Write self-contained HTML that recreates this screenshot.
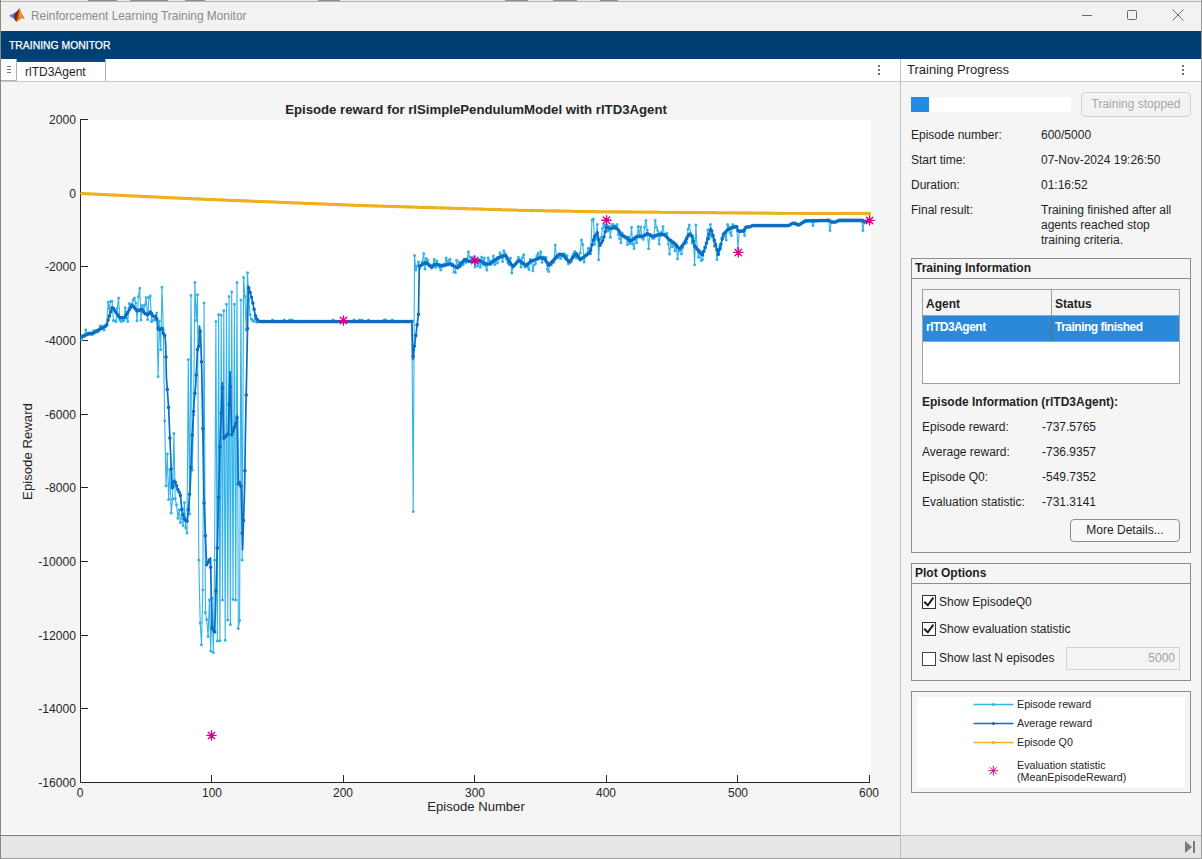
<!DOCTYPE html>
<html><head><meta charset="utf-8">
<style>
*{margin:0;padding:0;box-sizing:border-box}
html,body{width:1202px;height:859px;overflow:hidden;background:#f5f5f5;font-family:"Liberation Sans",sans-serif;color:#212121}
.a{position:absolute;white-space:nowrap}
#title{left:0;top:0;width:1202px;height:31px;background:#f2f2f2}
#band{left:0;top:31px;width:1202px;height:28px;background:#003f73}
#tabrow{left:1px;top:59px;width:899px;height:23px;background:#fff;border-bottom:1px solid #c8c8c8}
#rhead{left:901px;top:59px;width:300px;height:23px;background:#fff;border-bottom:1px solid #c8c8c8}
#lpanel{left:1px;top:82px;width:899px;height:753px;background:#f5f5f5}
#rpanel{left:901px;top:82px;width:300px;height:753px;background:#f5f5f5}
#vdiv{left:900px;top:59px;width:1px;height:799px;background:#c0c0c0;z-index:4}
#status{left:0;top:835px;width:1202px;height:24px;background:#e6e6e6;border-top:1px solid #777;border-bottom:1px solid #9a9a9a}
.lbl{font-size:12px;color:#262626}
.yl{font-size:12.1px}
.t13{font-size:12px;color:#1f1f1f}
.box{position:absolute;border:1px solid #8c8c8c}
.hdrline{position:absolute;height:1px;background:#8c8c8c}
.bold{font-weight:bold}
</style></head><body>
<div class="a" id="title"></div>
<div class="a" style="left:0;top:0;width:1202px;height:2px;background:#ececec;border-bottom:1px solid #b0b0b0"></div><div class="a" style="left:88px;top:0;width:29px;height:1px;background:#909090"></div><div class="a" style="left:130px;top:0;width:38px;height:1px;background:#909090"></div><div class="a" style="left:185px;top:0;width:20px;height:1px;background:#909090"></div><div class="a" style="left:318px;top:0;width:22px;height:1px;background:#909090"></div><div class="a" style="left:505px;top:0;width:23px;height:1px;background:#909090"></div><div class="a" style="left:553px;top:0;width:24px;height:1px;background:#909090"></div><div class="a" style="left:600px;top:0;width:18px;height:1px;background:#909090"></div>


<svg class="a" style="left:6px;top:5px" width="22" height="22" viewBox="0 0 22 22">
<defs><linearGradient id="lg" x1="0" y1="0" x2="1" y2="0"><stop offset="0" stop-color="#c0301a"/><stop offset="0.5" stop-color="#f29a2e"/><stop offset="1" stop-color="#d8421e"/></linearGradient></defs>
<path d="M3.2 10.6L7.5 8.6L10.5 6.5L13.3 3.6L12 8.5L9.5 12.5L7.8 13.6L5 12.3Z" fill="#3d8fd6"/>
<path d="M8.2 9.2L11.5 6L13.8 3.1L12.8 8.5L10.3 17L8 13.6Z" fill="#8a1c16"/>
<path d="M13.8 3.1L15.8 8.5L18.9 14.3L16.5 13L10.3 17L11.8 10Z" fill="url(#lg)"/>
<path d="M10.3 17L12.5 14L13.5 15.2Z" fill="#f5c02a"/>
</svg>
<div class="a" style="left:31px;top:9px;font-size:11.9px;color:#8a8a8a">Reinforcement Learning Training Monitor</div>
<div class="a" style="left:1082px;top:15px;width:10px;height:1px;background:#6a6a6a"></div>
<div class="a" style="left:1127px;top:10px;width:10px;height:10px;border:1px solid #6a6a6a;border-radius:1.5px"></div>
<svg class="a" style="left:1172px;top:9px" width="12" height="12"><path d="M0.5 0.5L11.5 11.5M11.5 0.5L0.5 11.5" stroke="#6a6a6a" stroke-width="1"/></svg>
<div class="a" id="band"></div>
<div class="a" style="left:9px;top:40px;font-size:10.4px;color:#fff;-webkit-text-stroke:0.25px #fff">TRAINING MONITOR</div>
<div class="a" id="tabrow"></div>
<div class="a" style="left:1px;top:59px;width:16px;height:22px;background:#fff;border-right:1px solid #b0b0b0;border-bottom:1px solid #b0b0b0"></div>
<div class="a" style="left:7px;top:66px;width:4px;height:1px;background:#777;box-shadow:0 3px 0 #777,0 6px 0 #777"></div>
<div class="a" style="left:17px;top:59px;width:88px;height:3px;background:#004a8c"></div>
<div class="a" style="left:105px;top:59px;width:1px;height:22px;background:#b0b0b0"></div>
<div class="a" style="left:25px;top:65px;font-size:12px;color:#1f1f1f">rlTD3Agent</div>
<div class="a" style="left:878px;top:65px;width:2px;height:2px;background:#6e6e6e;box-shadow:0 4px 0 #6e6e6e,0 8px 0 #6e6e6e"></div>
<div class="a" id="rhead"></div>
<div class="a" style="left:907px;top:62px;font-size:13px;color:#1f1f1f">Training Progress</div>
<div class="a" style="left:1182px;top:65px;width:2px;height:2px;background:#6e6e6e;box-shadow:0 4px 0 #6e6e6e,0 8px 0 #6e6e6e"></div>
<div class="a" id="lpanel"></div>
<div class="a" id="rpanel"></div>
<div class="a" id="vdiv"></div>

<!-- chart -->
<div class="a" style="left:81px;top:120px;width:790px;height:662px;background:#fff"></div>
<svg class="a" style="left:0;top:0" width="1202" height="859">
<path d="M80.5 119V782.5H870" stroke="#262626" stroke-width="1" fill="none"/>
<path d="M81 119.5H88M81 193.5H88M81 266.5H88M81 340.5H88M81 414.5H88M81 487.5H88M81 561.5H88M81 635.5H88M81 708.5H88M81 782.5H88M80.5 782V775M211.5 782V775M343.5 782V775M474.5 782V775M606.5 782V775M737.5 782V775M869.5 782V775" stroke="#262626" stroke-width="1" fill="none"/>
<polyline points="81.8,339.9 83.1,335.8 84.4,334.8 85.8,329.8 87.1,334.4 88.4,333.3 89.7,332.7 91.0,334.2 92.3,334.2 93.7,330.8 95.0,331.0 96.3,330.4 97.6,331.9 98.9,330.8 100.2,326.0 101.5,326.0 102.9,329.0 104.2,329.9 105.5,326.0 106.8,323.7 108.1,302.3 109.4,309.1 110.7,301.2 112.1,301.3 113.4,320.5 114.7,320.8 116.0,321.5 117.3,308.3 118.6,298.0 119.9,320.0 121.3,321.5 122.6,320.6 123.9,320.4 125.2,307.7 126.5,318.0 127.8,321.5 129.2,303.5 130.5,306.0 131.8,304.2 133.1,300.0 134.4,298.0 135.7,303.0 137.0,320.8 138.4,296.5 139.7,288.3 141.0,320.1 142.3,305.4 143.6,310.0 144.9,304.9 146.2,297.5 147.6,319.5 148.9,297.5 150.2,295.9 151.5,321.5 152.8,320.5 154.1,319.6 155.5,320.0 156.8,312.9 158.1,376.5 159.4,321.0 160.7,349.7 162.0,287.3 163.3,330.0 164.7,420.8 166.0,485.8 167.3,454.0 168.6,499.4 169.9,470.0 171.2,513.0 172.6,499.0 173.9,433.4 175.2,498.4 176.5,504.7 177.8,518.3 179.1,510.0 180.4,522.5 181.8,515.0 183.1,525.6 184.4,502.6 185.7,527.7 187.0,533.0 188.3,359.6 189.6,514.0 191.0,295.4 192.3,470.0 193.6,414.7 194.9,282.5 196.2,320.5 197.5,294.7 198.8,560.0 200.2,623.0 201.5,644.7 202.8,590.0 204.1,303.0 205.4,612.6 206.7,619.6 208.1,636.4 209.4,600.0 210.7,651.0 212.0,598.0 213.3,652.5 214.6,560.0 215.9,321.5 217.3,641.0 218.6,314.4 219.9,640.7 221.2,315.0 222.5,600.0 223.8,310.6 225.2,640.2 226.5,304.2 227.8,620.0 229.1,296.5 230.4,624.6 231.7,292.0 233.0,599.2 234.4,304.2 235.7,600.0 237.0,282.4 238.3,628.6 239.6,620.6 240.9,300.0 242.2,560.0 243.6,277.4 244.9,296.5 246.2,330.0 247.5,272.8 248.8,300.0 250.1,314.6 251.4,319.0 252.8,321.0 254.1,321.0 255.4,315.9 256.7,322.3 258.0,321.5 259.3,321.5 260.7,321.5 262.0,321.5 263.3,321.5 264.6,321.5 265.9,321.5 267.2,321.5 268.5,321.5 269.9,321.5 271.2,321.5 272.5,320.0 273.8,321.5 275.1,321.5 276.4,321.5 277.8,321.5 279.1,321.5 280.4,321.5 281.7,321.5 283.0,321.5 284.3,320.0 285.6,321.5 287.0,321.5 288.3,321.5 289.6,320.0 290.9,321.5 292.2,320.0 293.5,321.5 294.8,321.5 296.2,321.5 297.5,321.5 298.8,321.5 300.1,321.5 301.4,321.5 302.7,321.5 304.0,321.5 305.4,321.5 306.7,321.5 308.0,321.5 309.3,321.5 310.6,321.5 311.9,321.5 313.3,321.5 314.6,321.5 315.9,321.5 317.2,321.5 318.5,321.5 319.8,321.5 321.1,321.5 322.5,321.5 323.8,321.5 325.1,321.5 326.4,321.5 327.7,321.5 329.0,321.5 330.4,321.5 331.7,321.5 333.0,320.0 334.3,321.5 335.6,321.5 336.9,321.5 338.2,321.5 339.6,321.5 340.9,321.5 342.2,321.5 343.5,321.5 344.8,321.5 346.1,321.5 347.4,321.5 348.8,321.5 350.1,321.5 351.4,321.5 352.7,321.5 354.0,320.0 355.3,321.5 356.6,321.5 358.0,321.5 359.3,320.0 360.6,321.5 361.9,320.0 363.2,321.5 364.5,321.5 365.9,321.5 367.2,321.5 368.5,320.0 369.8,321.5 371.1,321.5 372.4,321.5 373.7,321.5 375.1,321.5 376.4,321.5 377.7,321.5 379.0,321.5 380.3,321.5 381.6,321.5 382.9,321.5 384.3,320.0 385.6,320.0 386.9,321.5 388.2,321.5 389.5,321.5 390.8,321.5 392.2,320.0 393.5,321.5 394.8,321.5 396.1,321.5 397.4,321.5 398.7,321.5 400.0,321.5 401.4,321.5 402.7,321.5 404.0,321.5 405.3,321.5 406.6,321.5 407.9,321.5 409.2,321.5 410.6,321.5 411.9,321.1 413.2,511.5 414.5,255.5 415.8,270.0 417.1,266.0 418.5,262.0 419.8,268.0 421.1,265.8 422.4,261.7 423.7,253.6 425.0,269.0 426.3,258.5 427.7,260.3 429.0,265.4 430.3,266.1 431.6,268.0 432.9,265.1 434.2,259.4 435.6,267.5 436.9,260.9 438.2,265.6 439.5,267.3 440.8,270.0 442.1,265.1 443.4,264.6 444.8,264.4 446.1,257.9 447.4,261.6 448.7,260.3 450.0,259.3 451.3,265.1 452.6,264.0 454.0,272.0 455.3,272.4 456.6,260.3 457.9,268.0 459.2,262.1 460.5,266.5 461.8,263.4 463.2,264.7 464.5,260.8 465.8,262.4 467.1,259.2 468.4,251.7 469.7,257.0 471.1,258.1 472.4,259.3 473.7,257.1 475.0,267.0 476.3,260.2 477.6,265.7 478.9,259.5 480.3,267.2 481.6,257.1 482.9,264.7 484.2,258.1 485.5,265.5 486.8,270.0 488.1,257.8 489.5,260.7 490.8,264.3 492.1,261.6 493.4,256.1 494.7,264.6 496.0,259.4 497.4,263.0 498.7,258.8 500.0,252.8 501.3,255.0 502.6,261.6 503.9,250.7 505.2,253.8 506.6,259.0 507.9,263.0 509.2,264.6 510.5,257.9 511.8,273.0 513.1,265.9 514.5,265.2 515.8,263.7 517.1,261.4 518.4,257.2 519.7,259.7 521.0,266.9 522.3,257.8 523.7,254.7 525.0,267.0 526.3,266.3 527.6,266.8 528.9,269.5 530.2,259.2 531.5,261.8 532.9,270.7 534.2,264.8 535.5,263.5 536.8,255.9 538.1,253.3 539.4,257.0 540.8,251.7 542.1,262.3 543.4,256.9 544.7,257.5 546.0,257.6 547.3,268.9 548.6,271.6 550.0,262.7 551.3,265.1 552.6,261.0 553.9,262.2 555.2,245.1 556.5,256.0 557.8,257.5 559.2,256.0 560.5,258.6 561.8,256.9 563.1,255.0 564.4,253.8 565.7,259.0 567.0,255.6 568.4,263.8 569.7,262.0 571.0,262.1 572.3,256.4 573.6,253.6 574.9,251.4 576.3,258.1 577.6,255.0 578.9,256.9 580.2,252.9 581.5,240.0 582.8,244.6 584.1,262.0 585.5,254.9 586.8,254.9 588.1,248.4 589.4,248.1 590.7,253.8 592.0,220.0 593.4,219.0 594.7,244.2 596.0,238.7 597.3,224.5 598.6,259.7 599.9,238.7 601.2,237.6 602.6,228.2 603.9,224.7 605.2,227.2 606.5,224.5 607.8,230.9 609.1,226.3 610.4,237.3 611.8,224.5 613.1,224.5 614.4,228.4 615.7,225.9 617.0,224.5 618.3,234.5 619.6,238.6 621.0,242.8 622.3,233.1 623.6,236.0 624.9,238.0 626.2,237.6 627.5,244.6 628.9,236.9 630.2,243.4 631.5,227.3 632.8,244.1 634.1,248.4 635.4,237.4 636.7,242.8 638.1,226.5 639.4,234.4 640.7,227.1 642.0,238.1 643.3,239.3 644.6,227.3 645.9,220.4 647.3,230.0 648.6,248.7 649.9,234.4 651.2,236.2 652.5,238.3 653.8,238.2 655.2,220.4 656.5,227.4 657.8,230.7 659.1,244.0 660.4,235.7 661.7,232.1 663.0,226.5 664.4,234.5 665.7,236.0 667.0,233.3 668.3,244.1 669.6,254.0 670.9,239.9 672.2,246.7 673.6,243.9 674.9,250.7 676.2,244.0 677.5,258.7 678.8,251.1 680.1,249.9 681.5,253.9 682.8,247.5 684.1,243.0 685.4,243.5 686.7,242.3 688.0,229.2 689.3,225.0 690.7,233.0 692.0,243.1 693.3,238.1 694.6,264.7 695.9,225.0 697.2,248.8 698.5,257.2 699.9,250.7 701.2,260.5 702.5,259.6 703.8,251.5 705.1,248.3 706.4,242.4 707.8,229.8 709.1,238.6 710.4,224.5 711.7,236.5 713.0,237.3 714.3,246.2 715.6,243.4 717.0,259.6 718.3,251.3 719.6,246.6 720.9,247.8 722.2,237.2 723.5,236.5 724.9,235.6 726.2,239.9 727.5,224.5 728.8,226.8 730.1,232.7 731.4,235.5 732.7,224.5 734.1,225.8 735.4,226.5 736.7,226.8 738.0,248.0 739.3,231.3 740.6,231.2 741.9,231.1 743.3,231.0 744.6,235.5 745.9,227.2 747.2,227.0 748.5,226.9 749.8,226.8 751.1,226.3 752.5,225.6 753.8,225.6 755.1,225.6 756.4,225.6 757.7,225.6 759.0,225.6 760.4,225.6 761.7,225.6 763.0,225.6 764.3,225.6 765.6,225.6 766.9,225.6 768.2,225.6 769.6,225.6 770.9,225.6 772.2,225.6 773.5,225.6 774.8,225.6 776.1,225.6 777.4,225.6 778.8,225.6 780.1,225.6 781.4,225.6 782.7,225.6 784.0,225.6 785.3,225.6 786.7,225.6 788.0,225.6 789.3,225.2 790.6,224.5 791.9,223.8 793.2,223.2 794.5,223.4 795.9,223.9 797.2,224.4 798.5,224.9 799.8,224.5 801.1,223.6 802.4,222.7 803.8,221.9 805.1,221.0 806.4,220.9 807.7,220.8 809.0,220.8 810.3,220.8 811.6,220.8 813.0,225.6 814.3,220.7 815.6,220.7 816.9,220.7 818.2,220.6 819.5,220.6 820.8,220.6 822.2,220.5 823.5,220.5 824.8,220.5 826.1,220.5 827.4,220.4 828.7,220.4 830.0,230.4 831.4,222.0 832.7,222.0 834.0,222.0 835.3,222.0 836.6,221.5 837.9,220.8 839.3,220.4 840.6,220.4 841.9,220.4 843.2,220.4 844.5,220.4 845.8,220.4 847.1,220.4 848.5,220.4 849.8,220.4 851.1,220.4 852.4,220.4 853.7,220.4 855.0,220.4 856.4,220.4 857.7,220.4 859.0,220.4 860.3,220.4 861.6,220.4 862.9,230.4 864.2,221.9 865.6,221.5 866.9,221.2 868.2,220.8 869.5,220.4" fill="none" stroke="#33b3e8" stroke-width="1.1" stroke-linejoin="round"/>
<path d="M81.8 339.9h0M83.1 335.8h0M84.4 334.8h0M85.8 329.8h0M87.1 334.4h0M88.4 333.3h0M89.7 332.7h0M91.0 334.2h0M92.3 334.2h0M93.7 330.8h0M95.0 331.0h0M96.3 330.4h0M97.6 331.9h0M98.9 330.8h0M100.2 326.0h0M101.5 326.0h0M102.9 329.0h0M104.2 329.9h0M105.5 326.0h0M106.8 323.7h0M108.1 302.3h0M109.4 309.1h0M110.7 301.2h0M112.1 301.3h0M113.4 320.5h0M114.7 320.8h0M116.0 321.5h0M117.3 308.3h0M118.6 298.0h0M119.9 320.0h0M121.3 321.5h0M122.6 320.6h0M123.9 320.4h0M125.2 307.7h0M126.5 318.0h0M127.8 321.5h0M129.2 303.5h0M130.5 306.0h0M131.8 304.2h0M133.1 300.0h0M134.4 298.0h0M135.7 303.0h0M137.0 320.8h0M138.4 296.5h0M139.7 288.3h0M141.0 320.1h0M142.3 305.4h0M143.6 310.0h0M144.9 304.9h0M146.2 297.5h0M147.6 319.5h0M148.9 297.5h0M150.2 295.9h0M151.5 321.5h0M152.8 320.5h0M154.1 319.6h0M155.5 320.0h0M156.8 312.9h0M158.1 376.5h0M159.4 321.0h0M160.7 349.7h0M162.0 287.3h0M163.3 330.0h0M164.7 420.8h0M166.0 485.8h0M167.3 454.0h0M168.6 499.4h0M169.9 470.0h0M171.2 513.0h0M172.6 499.0h0M173.9 433.4h0M175.2 498.4h0M176.5 504.7h0M177.8 518.3h0M179.1 510.0h0M180.4 522.5h0M181.8 515.0h0M183.1 525.6h0M184.4 502.6h0M185.7 527.7h0M187.0 533.0h0M188.3 359.6h0M189.6 514.0h0M191.0 295.4h0M192.3 470.0h0M193.6 414.7h0M194.9 282.5h0M196.2 320.5h0M197.5 294.7h0M198.8 560.0h0M200.2 623.0h0M201.5 644.7h0M202.8 590.0h0M204.1 303.0h0M205.4 612.6h0M206.7 619.6h0M208.1 636.4h0M209.4 600.0h0M210.7 651.0h0M212.0 598.0h0M213.3 652.5h0M214.6 560.0h0M215.9 321.5h0M217.3 641.0h0M218.6 314.4h0M219.9 640.7h0M221.2 315.0h0M222.5 600.0h0M223.8 310.6h0M225.2 640.2h0M226.5 304.2h0M227.8 620.0h0M229.1 296.5h0M230.4 624.6h0M231.7 292.0h0M233.0 599.2h0M234.4 304.2h0M235.7 600.0h0M237.0 282.4h0M238.3 628.6h0M239.6 620.6h0M240.9 300.0h0M242.2 560.0h0M243.6 277.4h0M244.9 296.5h0M246.2 330.0h0M247.5 272.8h0M248.8 300.0h0M250.1 314.6h0M251.4 319.0h0M252.8 321.0h0M254.1 321.0h0M255.4 315.9h0M256.7 322.3h0M258.0 321.5h0M259.3 321.5h0M260.7 321.5h0M262.0 321.5h0M263.3 321.5h0M264.6 321.5h0M265.9 321.5h0M267.2 321.5h0M268.5 321.5h0M269.9 321.5h0M271.2 321.5h0M272.5 320.0h0M273.8 321.5h0M275.1 321.5h0M276.4 321.5h0M277.8 321.5h0M279.1 321.5h0M280.4 321.5h0M281.7 321.5h0M283.0 321.5h0M284.3 320.0h0M285.6 321.5h0M287.0 321.5h0M288.3 321.5h0M289.6 320.0h0M290.9 321.5h0M292.2 320.0h0M293.5 321.5h0M294.8 321.5h0M296.2 321.5h0M297.5 321.5h0M298.8 321.5h0M300.1 321.5h0M301.4 321.5h0M302.7 321.5h0M304.0 321.5h0M305.4 321.5h0M306.7 321.5h0M308.0 321.5h0M309.3 321.5h0M310.6 321.5h0M311.9 321.5h0M313.3 321.5h0M314.6 321.5h0M315.9 321.5h0M317.2 321.5h0M318.5 321.5h0M319.8 321.5h0M321.1 321.5h0M322.5 321.5h0M323.8 321.5h0M325.1 321.5h0M326.4 321.5h0M327.7 321.5h0M329.0 321.5h0M330.4 321.5h0M331.7 321.5h0M333.0 320.0h0M334.3 321.5h0M335.6 321.5h0M336.9 321.5h0M338.2 321.5h0M339.6 321.5h0M340.9 321.5h0M342.2 321.5h0M343.5 321.5h0M344.8 321.5h0M346.1 321.5h0M347.4 321.5h0M348.8 321.5h0M350.1 321.5h0M351.4 321.5h0M352.7 321.5h0M354.0 320.0h0M355.3 321.5h0M356.6 321.5h0M358.0 321.5h0M359.3 320.0h0M360.6 321.5h0M361.9 320.0h0M363.2 321.5h0M364.5 321.5h0M365.9 321.5h0M367.2 321.5h0M368.5 320.0h0M369.8 321.5h0M371.1 321.5h0M372.4 321.5h0M373.7 321.5h0M375.1 321.5h0M376.4 321.5h0M377.7 321.5h0M379.0 321.5h0M380.3 321.5h0M381.6 321.5h0M382.9 321.5h0M384.3 320.0h0M385.6 320.0h0M386.9 321.5h0M388.2 321.5h0M389.5 321.5h0M390.8 321.5h0M392.2 320.0h0M393.5 321.5h0M394.8 321.5h0M396.1 321.5h0M397.4 321.5h0M398.7 321.5h0M400.0 321.5h0M401.4 321.5h0M402.7 321.5h0M404.0 321.5h0M405.3 321.5h0M406.6 321.5h0M407.9 321.5h0M409.2 321.5h0M410.6 321.5h0M411.9 321.1h0M413.2 511.5h0M414.5 255.5h0M415.8 270.0h0M417.1 266.0h0M418.5 262.0h0M419.8 268.0h0M421.1 265.8h0M422.4 261.7h0M423.7 253.6h0M425.0 269.0h0M426.3 258.5h0M427.7 260.3h0M429.0 265.4h0M430.3 266.1h0M431.6 268.0h0M432.9 265.1h0M434.2 259.4h0M435.6 267.5h0M436.9 260.9h0M438.2 265.6h0M439.5 267.3h0M440.8 270.0h0M442.1 265.1h0M443.4 264.6h0M444.8 264.4h0M446.1 257.9h0M447.4 261.6h0M448.7 260.3h0M450.0 259.3h0M451.3 265.1h0M452.6 264.0h0M454.0 272.0h0M455.3 272.4h0M456.6 260.3h0M457.9 268.0h0M459.2 262.1h0M460.5 266.5h0M461.8 263.4h0M463.2 264.7h0M464.5 260.8h0M465.8 262.4h0M467.1 259.2h0M468.4 251.7h0M469.7 257.0h0M471.1 258.1h0M472.4 259.3h0M473.7 257.1h0M475.0 267.0h0M476.3 260.2h0M477.6 265.7h0M478.9 259.5h0M480.3 267.2h0M481.6 257.1h0M482.9 264.7h0M484.2 258.1h0M485.5 265.5h0M486.8 270.0h0M488.1 257.8h0M489.5 260.7h0M490.8 264.3h0M492.1 261.6h0M493.4 256.1h0M494.7 264.6h0M496.0 259.4h0M497.4 263.0h0M498.7 258.8h0M500.0 252.8h0M501.3 255.0h0M502.6 261.6h0M503.9 250.7h0M505.2 253.8h0M506.6 259.0h0M507.9 263.0h0M509.2 264.6h0M510.5 257.9h0M511.8 273.0h0M513.1 265.9h0M514.5 265.2h0M515.8 263.7h0M517.1 261.4h0M518.4 257.2h0M519.7 259.7h0M521.0 266.9h0M522.3 257.8h0M523.7 254.7h0M525.0 267.0h0M526.3 266.3h0M527.6 266.8h0M528.9 269.5h0M530.2 259.2h0M531.5 261.8h0M532.9 270.7h0M534.2 264.8h0M535.5 263.5h0M536.8 255.9h0M538.1 253.3h0M539.4 257.0h0M540.8 251.7h0M542.1 262.3h0M543.4 256.9h0M544.7 257.5h0M546.0 257.6h0M547.3 268.9h0M548.6 271.6h0M550.0 262.7h0M551.3 265.1h0M552.6 261.0h0M553.9 262.2h0M555.2 245.1h0M556.5 256.0h0M557.8 257.5h0M559.2 256.0h0M560.5 258.6h0M561.8 256.9h0M563.1 255.0h0M564.4 253.8h0M565.7 259.0h0M567.0 255.6h0M568.4 263.8h0M569.7 262.0h0M571.0 262.1h0M572.3 256.4h0M573.6 253.6h0M574.9 251.4h0M576.3 258.1h0M577.6 255.0h0M578.9 256.9h0M580.2 252.9h0M581.5 240.0h0M582.8 244.6h0M584.1 262.0h0M585.5 254.9h0M586.8 254.9h0M588.1 248.4h0M589.4 248.1h0M590.7 253.8h0M592.0 220.0h0M593.4 219.0h0M594.7 244.2h0M596.0 238.7h0M597.3 224.5h0M598.6 259.7h0M599.9 238.7h0M601.2 237.6h0M602.6 228.2h0M603.9 224.7h0M605.2 227.2h0M606.5 224.5h0M607.8 230.9h0M609.1 226.3h0M610.4 237.3h0M611.8 224.5h0M613.1 224.5h0M614.4 228.4h0M615.7 225.9h0M617.0 224.5h0M618.3 234.5h0M619.6 238.6h0M621.0 242.8h0M622.3 233.1h0M623.6 236.0h0M624.9 238.0h0M626.2 237.6h0M627.5 244.6h0M628.9 236.9h0M630.2 243.4h0M631.5 227.3h0M632.8 244.1h0M634.1 248.4h0M635.4 237.4h0M636.7 242.8h0M638.1 226.5h0M639.4 234.4h0M640.7 227.1h0M642.0 238.1h0M643.3 239.3h0M644.6 227.3h0M645.9 220.4h0M647.3 230.0h0M648.6 248.7h0M649.9 234.4h0M651.2 236.2h0M652.5 238.3h0M653.8 238.2h0M655.2 220.4h0M656.5 227.4h0M657.8 230.7h0M659.1 244.0h0M660.4 235.7h0M661.7 232.1h0M663.0 226.5h0M664.4 234.5h0M665.7 236.0h0M667.0 233.3h0M668.3 244.1h0M669.6 254.0h0M670.9 239.9h0M672.2 246.7h0M673.6 243.9h0M674.9 250.7h0M676.2 244.0h0M677.5 258.7h0M678.8 251.1h0M680.1 249.9h0M681.5 253.9h0M682.8 247.5h0M684.1 243.0h0M685.4 243.5h0M686.7 242.3h0M688.0 229.2h0M689.3 225.0h0M690.7 233.0h0M692.0 243.1h0M693.3 238.1h0M694.6 264.7h0M695.9 225.0h0M697.2 248.8h0M698.5 257.2h0M699.9 250.7h0M701.2 260.5h0M702.5 259.6h0M703.8 251.5h0M705.1 248.3h0M706.4 242.4h0M707.8 229.8h0M709.1 238.6h0M710.4 224.5h0M711.7 236.5h0M713.0 237.3h0M714.3 246.2h0M715.6 243.4h0M717.0 259.6h0M718.3 251.3h0M719.6 246.6h0M720.9 247.8h0M722.2 237.2h0M723.5 236.5h0M724.9 235.6h0M726.2 239.9h0M727.5 224.5h0M728.8 226.8h0M730.1 232.7h0M731.4 235.5h0M732.7 224.5h0M734.1 225.8h0M735.4 226.5h0M736.7 226.8h0M738.0 248.0h0M739.3 231.3h0M740.6 231.2h0M741.9 231.1h0M743.3 231.0h0M744.6 235.5h0M745.9 227.2h0M747.2 227.0h0M748.5 226.9h0M749.8 226.8h0M751.1 226.3h0M752.5 225.6h0M753.8 225.6h0M755.1 225.6h0M756.4 225.6h0M757.7 225.6h0M759.0 225.6h0M760.4 225.6h0M761.7 225.6h0M763.0 225.6h0M764.3 225.6h0M765.6 225.6h0M766.9 225.6h0M768.2 225.6h0M769.6 225.6h0M770.9 225.6h0M772.2 225.6h0M773.5 225.6h0M774.8 225.6h0M776.1 225.6h0M777.4 225.6h0M778.8 225.6h0M780.1 225.6h0M781.4 225.6h0M782.7 225.6h0M784.0 225.6h0M785.3 225.6h0M786.7 225.6h0M788.0 225.6h0M789.3 225.2h0M790.6 224.5h0M791.9 223.8h0M793.2 223.2h0M794.5 223.4h0M795.9 223.9h0M797.2 224.4h0M798.5 224.9h0M799.8 224.5h0M801.1 223.6h0M802.4 222.7h0M803.8 221.9h0M805.1 221.0h0M806.4 220.9h0M807.7 220.8h0M809.0 220.8h0M810.3 220.8h0M811.6 220.8h0M813.0 225.6h0M814.3 220.7h0M815.6 220.7h0M816.9 220.7h0M818.2 220.6h0M819.5 220.6h0M820.8 220.6h0M822.2 220.5h0M823.5 220.5h0M824.8 220.5h0M826.1 220.5h0M827.4 220.4h0M828.7 220.4h0M830.0 230.4h0M831.4 222.0h0M832.7 222.0h0M834.0 222.0h0M835.3 222.0h0M836.6 221.5h0M837.9 220.8h0M839.3 220.4h0M840.6 220.4h0M841.9 220.4h0M843.2 220.4h0M844.5 220.4h0M845.8 220.4h0M847.1 220.4h0M848.5 220.4h0M849.8 220.4h0M851.1 220.4h0M852.4 220.4h0M853.7 220.4h0M855.0 220.4h0M856.4 220.4h0M857.7 220.4h0M859.0 220.4h0M860.3 220.4h0M861.6 220.4h0M862.9 230.4h0M864.2 221.9h0M865.6 221.5h0M866.9 221.2h0M868.2 220.8h0M869.5 220.4h0" stroke="#33b3e8" stroke-width="3" stroke-linecap="round" fill="none"/>
<polyline points="81.8,336.4 83.3,336.4 87.8,334.0 93.1,333.3 99.2,329.5 106.7,325.4 108.3,319.3 112.4,306.9 119.6,317.8 124.9,317.4 132.0,304.8 137.4,311.2 141.4,309.0 145.0,313.5 148.1,314.9 150.6,311.4 152.7,316.0 155.8,316.3 157.2,319.8 158.3,330.3 162.5,328.2 163.2,333.1 164.9,335.9 165.7,344.0 166.4,377.2 168.6,407.3 170.0,440.0 172.1,488.9 174.4,480.0 178.0,490.0 180.3,494.0 182.0,512.0 185.0,520.0 187.3,521.5 190.2,487.7 192.0,440.0 194.2,400.5 195.7,385.3 197.5,349.7 198.9,346.2 199.5,326.0 200.6,335.0 201.7,368.5 203.0,440.0 204.1,502.9 206.6,565.0 210.5,558.0 211.9,628.0 214.7,632.0 217.5,540.0 219.8,449.3 222.4,382.6 223.6,438.4 228.3,433.7 230.0,371.5 231.7,434.9 235.8,423.3 237.4,415.8 238.3,484.0 240.0,482.0 241.3,488.0 242.6,550.0 244.6,488.5 245.6,424.0 247.1,350.0 248.3,286.2 251.8,298.4 255.8,317.6 258.8,321.5 411.9,321.5 412.8,359.7 418.5,314.0 419.3,266.0 420.5,265.5 425.8,262.5 431.7,267.0 435.8,264.0 442.5,266.0 450.0,263.7 457.5,268.0 465.0,259.0 469.0,261.6 474.6,260.8 480.0,260.8 485.8,264.0 490.0,264.0 497.5,258.0 505.8,255.4 510.0,262.9 513.1,266.6 518.9,260.3 525.7,265.5 531.0,261.3 540.4,257.7 544.6,258.7 548.8,265.5 559.3,254.0 563.5,255.0 569.2,262.4 576.0,253.5 580.2,259.7 588.6,253.5 590.7,250.3 593.9,237.7 597.5,232.5 599.6,246.1 603.3,239.3 606.3,227.2 610.5,228.8 614.7,226.7 618.9,230.4 621.0,235.0 626.2,237.2 630.4,241.4 636.7,236.6 644.0,236.1 647.2,233.5 653.5,236.6 659.7,234.0 665.0,235.0 669.2,239.8 673.4,242.4 679.7,249.2 683.9,243.5 689.1,234.0 692.2,236.1 694.3,245.6 699.4,251.8 702.6,255.0 705.7,245.6 711.0,228.3 718.3,254.5 723.5,234.0 727.7,229.8 731.9,227.7 737.2,226.7 738.2,231.4 744.0,230.9 745.6,227.2 750.8,226.7 751.8,225.6 788.4,225.6 793.6,223.0 798.9,225.1 805.2,220.9 829.3,220.4 831.4,222.0 835.6,222.0 838.7,220.4 862.8,220.4 863.9,222.0 869.5,220.4" fill="none" stroke="#0a6ec4" stroke-width="1.7" stroke-linejoin="round"/>
<path d="M81.8 336.4h0M83.1 336.4h0M84.4 335.8h0M85.8 335.1h0M87.1 334.4h0M88.4 333.9h0M89.7 333.7h0M91.0 333.6h0M92.3 333.4h0M93.7 333.0h0M95.0 332.1h0M96.3 331.3h0M97.6 330.5h0M98.9 329.7h0M100.2 328.9h0M101.5 328.2h0M102.9 327.5h0M104.2 326.8h0M105.5 326.1h0M106.8 325.0h0M108.1 320.0h0M109.4 315.9h0M110.7 311.9h0M112.1 307.9h0M113.4 308.4h0M114.7 310.4h0M116.0 312.4h0M117.3 314.3h0M118.6 316.3h0M119.9 317.8h0M121.3 317.7h0M122.6 317.6h0M123.9 317.5h0M125.2 316.8h0M126.5 314.5h0M127.8 312.2h0M129.2 309.8h0M130.5 307.5h0M131.8 305.2h0M133.1 306.1h0M134.4 307.7h0M135.7 309.2h0M137.0 310.8h0M138.4 310.7h0M139.7 309.9h0M141.0 309.2h0M142.3 310.1h0M143.6 311.8h0M144.9 313.4h0M146.2 314.1h0M147.6 314.7h0M148.9 313.8h0M150.2 312.0h0M151.5 313.4h0M152.8 316.0h0M154.1 316.1h0M155.5 316.3h0M156.8 318.7h0M158.1 328.2h0M159.4 329.8h0M160.7 329.1h0M162.0 328.4h0M163.3 333.3h0M164.7 335.5h0M166.0 357.0h0M167.3 389.4h0M168.6 407.4h0M169.9 438.1h0M171.2 468.8h0M172.6 487.2h0M173.9 482.1h0M175.2 482.2h0M176.5 485.8h0M177.8 489.5h0M179.1 492.0h0M180.4 495.5h0M181.8 509.4h0M183.1 514.9h0M184.4 518.4h0M185.7 520.5h0M187.0 521.3h0M188.3 509.5h0M189.6 494.2h0M191.0 467.6h0M192.3 435.1h0M193.6 411.5h0M194.9 393.4h0M196.2 375.0h0M197.5 349.6h0M198.8 346.3h0M200.2 331.4h0M201.5 361.8h0M202.8 428.7h0M204.1 503.1h0M205.4 535.8h0M206.7 564.7h0M208.1 562.4h0M209.4 560.0h0M210.7 567.3h0M212.0 628.1h0M213.3 630.0h0M214.6 631.9h0M215.9 591.1h0M217.3 547.9h0M218.6 497.6h0M219.9 447.0h0M221.2 413.3h0M222.5 388.2h0M223.8 438.2h0M225.2 436.8h0M226.5 435.5h0M227.8 434.2h0M229.1 404.6h0M230.4 386.8h0M231.7 434.8h0M233.0 431.1h0M234.4 427.4h0M235.7 423.7h0M237.0 417.7h0M238.3 484.0h0M239.6 482.5h0M240.9 486.3h0M242.2 533.1h0M243.6 520.5h0M244.9 470.8h0M246.2 394.9h0M247.5 328.5h0M248.8 288.0h0M250.1 292.6h0M251.4 297.2h0M252.8 303.0h0M254.1 309.3h0M255.4 315.7h0M256.7 318.8h0M258.0 320.5h0M259.3 321.5h0M260.7 321.5h0M262.0 321.5h0M263.3 321.5h0M264.6 321.5h0M265.9 321.5h0M267.2 321.5h0M268.5 321.5h0M269.9 321.5h0M271.2 321.5h0M272.5 321.5h0M273.8 321.5h0M275.1 321.5h0M276.4 321.5h0M277.8 321.5h0M279.1 321.5h0M280.4 321.5h0M281.7 321.5h0M283.0 321.5h0M284.3 321.5h0M285.6 321.5h0M287.0 321.5h0M288.3 321.5h0M289.6 321.5h0M290.9 321.5h0M292.2 321.5h0M293.5 321.5h0M294.8 321.5h0M296.2 321.5h0M297.5 321.5h0M298.8 321.5h0M300.1 321.5h0M301.4 321.5h0M302.7 321.5h0M304.0 321.5h0M305.4 321.5h0M306.7 321.5h0M308.0 321.5h0M309.3 321.5h0M310.6 321.5h0M311.9 321.5h0M313.3 321.5h0M314.6 321.5h0M315.9 321.5h0M317.2 321.5h0M318.5 321.5h0M319.8 321.5h0M321.1 321.5h0M322.5 321.5h0M323.8 321.5h0M325.1 321.5h0M326.4 321.5h0M327.7 321.5h0M329.0 321.5h0M330.4 321.5h0M331.7 321.5h0M333.0 321.5h0M334.3 321.5h0M335.6 321.5h0M336.9 321.5h0M338.2 321.5h0M339.6 321.5h0M340.9 321.5h0M342.2 321.5h0M343.5 321.5h0M344.8 321.5h0M346.1 321.5h0M347.4 321.5h0M348.8 321.5h0M350.1 321.5h0M351.4 321.5h0M352.7 321.5h0M354.0 321.5h0M355.3 321.5h0M356.6 321.5h0M358.0 321.5h0M359.3 321.5h0M360.6 321.5h0M361.9 321.5h0M363.2 321.5h0M364.5 321.5h0M365.9 321.5h0M367.2 321.5h0M368.5 321.5h0M369.8 321.5h0M371.1 321.5h0M372.4 321.5h0M373.7 321.5h0M375.1 321.5h0M376.4 321.5h0M377.7 321.5h0M379.0 321.5h0M380.3 321.5h0M381.6 321.5h0M382.9 321.5h0M384.3 321.5h0M385.6 321.5h0M386.9 321.5h0M388.2 321.5h0M389.5 321.5h0M390.8 321.5h0M392.2 321.5h0M393.5 321.5h0M394.8 321.5h0M396.1 321.5h0M397.4 321.5h0M398.7 321.5h0M400.0 321.5h0M401.4 321.5h0M402.7 321.5h0M404.0 321.5h0M405.3 321.5h0M406.6 321.5h0M407.9 321.5h0M409.2 321.5h0M410.6 321.5h0M411.9 321.5h0M413.2 356.5h0M414.5 346.0h0M415.8 335.4h0M417.1 324.9h0M418.5 314.4h0M419.8 265.8h0M421.1 265.2h0M422.4 264.4h0M423.7 263.7h0M425.0 262.9h0M426.3 262.9h0M427.7 263.9h0M429.0 264.9h0M430.3 265.9h0M431.6 266.9h0M432.9 266.1h0M434.2 265.1h0M435.6 264.2h0M436.9 264.3h0M438.2 264.7h0M439.5 265.1h0M440.8 265.5h0M442.1 265.9h0M443.4 265.7h0M444.8 265.3h0M446.1 264.9h0M447.4 264.5h0M448.7 264.1h0M450.0 263.7h0M451.3 264.5h0M452.6 265.2h0M454.0 266.0h0M455.3 266.7h0M456.6 267.5h0M457.9 267.5h0M459.2 265.9h0M460.5 264.4h0M461.8 262.8h0M463.2 261.2h0M464.5 259.6h0M465.8 259.5h0M467.1 260.4h0M468.4 261.2h0M469.7 261.5h0M471.1 261.3h0M472.4 261.1h0M473.7 260.9h0M475.0 260.8h0M476.3 260.8h0M477.6 260.8h0M478.9 260.8h0M480.3 260.9h0M481.6 261.7h0M482.9 262.4h0M484.2 263.1h0M485.5 263.8h0M486.8 264.0h0M488.1 264.0h0M489.5 264.0h0M490.8 263.4h0M492.1 262.3h0M493.4 261.3h0M494.7 260.2h0M496.0 259.2h0M497.4 258.1h0M498.7 257.6h0M500.0 257.2h0M501.3 256.8h0M502.6 256.4h0M503.9 256.0h0M505.2 255.6h0M506.6 256.8h0M507.9 259.1h0M509.2 261.5h0M510.5 263.5h0M511.8 265.1h0M513.1 266.6h0M514.5 265.1h0M515.8 263.7h0M517.1 262.3h0M518.4 260.8h0M519.7 260.9h0M521.0 261.9h0M522.3 262.9h0M523.7 263.9h0M525.0 264.9h0M526.3 265.0h0M527.6 264.0h0M528.9 263.0h0M530.2 261.9h0M531.5 261.1h0M532.9 260.6h0M534.2 260.1h0M535.5 259.6h0M536.8 259.1h0M538.1 258.6h0M539.4 258.1h0M540.8 257.8h0M542.1 258.1h0M543.4 258.4h0M544.7 258.9h0M546.0 261.0h0M547.3 263.1h0M548.6 265.2h0M550.0 264.2h0M551.3 262.8h0M552.6 261.4h0M553.9 259.9h0M555.2 258.5h0M556.5 257.0h0M557.8 255.6h0M559.2 254.2h0M560.5 254.3h0M561.8 254.6h0M563.1 254.9h0M564.4 256.2h0M565.7 257.9h0M567.0 259.6h0M568.4 261.3h0M569.7 261.8h0M571.0 260.1h0M572.3 258.3h0M573.6 256.6h0M574.9 254.9h0M576.3 253.9h0M577.6 255.8h0M578.9 257.8h0M580.2 259.7h0M581.5 258.7h0M582.8 257.8h0M584.1 256.8h0M585.5 255.8h0M586.8 254.8h0M588.1 253.9h0M589.4 252.3h0M590.7 250.2h0M592.0 245.0h0M593.4 239.9h0M594.7 236.6h0M596.0 234.7h0M597.3 232.8h0M598.6 239.7h0M599.9 245.5h0M601.2 243.1h0M602.6 240.7h0M603.9 237.0h0M605.2 231.7h0M606.5 227.3h0M607.8 227.8h0M609.1 228.3h0M610.4 228.8h0M611.8 228.2h0M613.1 227.5h0M614.4 226.9h0M615.7 227.6h0M617.0 228.7h0M618.3 229.9h0M619.6 232.0h0M621.0 234.9h0M622.3 235.5h0M623.6 236.1h0M624.9 236.7h0M626.2 237.2h0M627.5 238.5h0M628.9 239.9h0M630.2 241.2h0M631.5 240.6h0M632.8 239.6h0M634.1 238.6h0M635.4 237.6h0M636.7 236.6h0M638.1 236.5h0M639.4 236.4h0M640.7 236.3h0M642.0 236.2h0M643.3 236.1h0M644.6 235.6h0M645.9 234.5h0M647.3 233.5h0M648.6 234.2h0M649.9 234.8h0M651.2 235.5h0M652.5 236.1h0M653.8 236.5h0M655.2 235.9h0M656.5 235.4h0M657.8 234.8h0M659.1 234.3h0M660.4 234.1h0M661.7 234.4h0M663.0 234.6h0M664.4 234.9h0M665.7 235.8h0M667.0 237.3h0M668.3 238.8h0M669.6 240.1h0M670.9 240.9h0M672.2 241.7h0M673.6 242.6h0M674.9 244.0h0M676.2 245.4h0M677.5 246.8h0M678.8 248.3h0M680.1 248.6h0M681.5 246.8h0M682.8 245.0h0M684.1 243.2h0M685.4 240.8h0M686.7 238.4h0M688.0 236.0h0M689.3 234.2h0M690.7 235.1h0M692.0 235.9h0M693.3 241.0h0M694.6 246.0h0M695.9 247.6h0M697.2 249.2h0M698.5 250.8h0M699.9 252.3h0M701.2 253.6h0M702.5 254.9h0M703.8 251.3h0M705.1 247.3h0M706.4 243.2h0M707.8 238.9h0M709.1 234.6h0M710.4 230.3h0M711.7 230.8h0M713.0 235.5h0M714.3 240.3h0M715.6 245.0h0M717.0 249.7h0M718.3 254.4h0M719.6 249.4h0M720.9 244.2h0M722.2 239.0h0M723.5 234.0h0M724.9 232.7h0M726.2 231.3h0M727.5 230.0h0M728.8 229.3h0M730.1 228.6h0M731.4 227.9h0M732.7 227.5h0M734.1 227.3h0M735.4 227.0h0M736.7 226.8h0M738.0 230.5h0M739.3 231.3h0M740.6 231.2h0M741.9 231.1h0M743.3 231.0h0M744.6 229.6h0M745.9 227.2h0M747.2 227.0h0M748.5 226.9h0M749.8 226.8h0M751.1 226.3h0M752.5 225.6h0M753.8 225.6h0M755.1 225.6h0M756.4 225.6h0M757.7 225.6h0M759.0 225.6h0M760.4 225.6h0M761.7 225.6h0M763.0 225.6h0M764.3 225.6h0M765.6 225.6h0M766.9 225.6h0M768.2 225.6h0M769.6 225.6h0M770.9 225.6h0M772.2 225.6h0M773.5 225.6h0M774.8 225.6h0M776.1 225.6h0M777.4 225.6h0M778.8 225.6h0M780.1 225.6h0M781.4 225.6h0M782.7 225.6h0M784.0 225.6h0M785.3 225.6h0M786.7 225.6h0M788.0 225.6h0M789.3 225.2h0M790.6 224.5h0M791.9 223.8h0M793.2 223.2h0M794.5 223.4h0M795.9 223.9h0M797.2 224.4h0M798.5 224.9h0M799.8 224.5h0M801.1 223.6h0M802.4 222.7h0M803.8 221.9h0M805.1 221.0h0M806.4 220.9h0M807.7 220.8h0M809.0 220.8h0M810.3 220.8h0M811.6 220.8h0M813.0 220.7h0M814.3 220.7h0M815.6 220.7h0M816.9 220.7h0M818.2 220.6h0M819.5 220.6h0M820.8 220.6h0M822.2 220.5h0M823.5 220.5h0M824.8 220.5h0M826.1 220.5h0M827.4 220.4h0M828.7 220.4h0M830.0 221.0h0M831.4 222.0h0M832.7 222.0h0M834.0 222.0h0M835.3 222.0h0M836.6 221.5h0M837.9 220.8h0M839.3 220.4h0M840.6 220.4h0M841.9 220.4h0M843.2 220.4h0M844.5 220.4h0M845.8 220.4h0M847.1 220.4h0M848.5 220.4h0M849.8 220.4h0M851.1 220.4h0M852.4 220.4h0M853.7 220.4h0M855.0 220.4h0M856.4 220.4h0M857.7 220.4h0M859.0 220.4h0M860.3 220.4h0M861.6 220.4h0M862.9 220.6h0M864.2 221.9h0M865.6 221.5h0M866.9 221.2h0M868.2 220.8h0M869.5 220.4h0" stroke="#0a6ec4" stroke-width="3.6" stroke-linecap="round" fill="none"/>
<polyline points="80.5,193.5 81.8,193.6 83.1,193.6 84.4,193.7 85.8,193.7 87.1,193.8 88.4,193.9 89.7,193.9 91.0,194.0 92.3,194.1 93.7,194.1 95.0,194.2 96.3,194.2 97.6,194.3 98.9,194.4 100.2,194.4 101.5,194.5 102.9,194.5 104.2,194.6 105.5,194.7 106.8,194.7 108.1,194.8 109.4,194.9 110.7,194.9 112.1,195.0 113.4,195.0 114.7,195.1 116.0,195.2 117.3,195.2 118.6,195.3 119.9,195.3 121.3,195.4 122.6,195.5 123.9,195.5 125.2,195.6 126.5,195.7 127.8,195.7 129.2,195.8 130.5,195.8 131.8,195.9 133.1,196.0 134.4,196.0 135.7,196.1 137.0,196.1 138.4,196.2 139.7,196.3 141.0,196.3 142.3,196.4 143.6,196.5 144.9,196.5 146.2,196.6 147.6,196.6 148.9,196.7 150.2,196.8 151.5,196.8 152.8,196.9 154.1,197.0 155.5,197.0 156.8,197.1 158.1,197.1 159.4,197.2 160.7,197.3 162.0,197.3 163.3,197.4 164.7,197.4 166.0,197.5 167.3,197.6 168.6,197.6 169.9,197.7 171.2,197.8 172.6,197.8 173.9,197.9 175.2,197.9 176.5,198.0 177.8,198.1 179.1,198.1 180.4,198.2 181.8,198.2 183.1,198.3 184.4,198.4 185.7,198.4 187.0,198.5 188.3,198.6 189.6,198.6 191.0,198.7 192.3,198.7 193.6,198.8 194.9,198.9 196.2,198.9 197.5,199.0 198.8,199.0 200.2,199.1 201.5,199.2 202.8,199.2 204.1,199.3 205.4,199.3 206.7,199.4 208.1,199.4 209.4,199.5 210.7,199.5 212.0,199.6 213.3,199.6 214.6,199.7 215.9,199.7 217.3,199.8 218.6,199.8 219.9,199.9 221.2,199.9 222.5,200.0 223.8,200.1 225.2,200.1 226.5,200.2 227.8,200.2 229.1,200.3 230.4,200.3 231.7,200.4 233.0,200.4 234.4,200.5 235.7,200.5 237.0,200.6 238.3,200.6 239.6,200.7 240.9,200.7 242.2,200.8 243.6,200.8 244.9,200.9 246.2,200.9 247.5,201.0 248.8,201.1 250.1,201.1 251.4,201.2 252.8,201.2 254.1,201.3 255.4,201.3 256.7,201.4 258.0,201.4 259.3,201.5 260.7,201.5 262.0,201.6 263.3,201.6 264.6,201.7 265.9,201.7 267.2,201.8 268.5,201.8 269.9,201.9 271.2,201.9 272.5,202.0 273.8,202.1 275.1,202.1 276.4,202.2 277.8,202.2 279.1,202.3 280.4,202.3 281.7,202.4 283.0,202.4 284.3,202.5 285.6,202.5 287.0,202.6 288.3,202.6 289.6,202.7 290.9,202.7 292.2,202.8 293.5,202.8 294.8,202.9 296.2,202.9 297.5,203.0 298.8,203.1 300.1,203.1 301.4,203.2 302.7,203.2 304.0,203.3 305.4,203.3 306.7,203.4 308.0,203.4 309.3,203.5 310.6,203.5 311.9,203.6 313.3,203.6 314.6,203.7 315.9,203.7 317.2,203.8 318.5,203.8 319.8,203.9 321.1,203.9 322.5,204.0 323.8,204.1 325.1,204.1 326.4,204.2 327.7,204.2 329.0,204.3 330.4,204.3 331.7,204.4 333.0,204.4 334.3,204.5 335.6,204.5 336.9,204.6 338.2,204.6 339.6,204.7 340.9,204.7 342.2,204.8 343.5,204.8 344.8,204.9 346.1,204.9 347.4,205.0 348.8,205.1 350.1,205.1 351.4,205.2 352.7,205.2 354.0,205.3 355.3,205.3 356.6,205.4 358.0,205.4 359.3,205.5 360.6,205.5 361.9,205.6 363.2,205.6 364.5,205.6 365.9,205.7 367.2,205.7 368.5,205.8 369.8,205.8 371.1,205.8 372.4,205.9 373.7,205.9 375.1,206.0 376.4,206.0 377.7,206.0 379.0,206.1 380.3,206.1 381.6,206.1 382.9,206.2 384.3,206.2 385.6,206.3 386.9,206.3 388.2,206.3 389.5,206.4 390.8,206.4 392.2,206.5 393.5,206.5 394.8,206.5 396.1,206.6 397.4,206.6 398.7,206.7 400.0,206.7 401.4,206.7 402.7,206.8 404.0,206.8 405.3,206.9 406.6,206.9 407.9,206.9 409.2,207.0 410.6,207.0 411.9,207.1 413.2,207.1 414.5,207.1 415.8,207.2 417.1,207.2 418.5,207.3 419.8,207.3 421.1,207.3 422.4,207.4 423.7,207.4 425.0,207.5 426.3,207.5 427.7,207.5 429.0,207.6 430.3,207.6 431.6,207.6 432.9,207.7 434.2,207.7 435.6,207.8 436.9,207.8 438.2,207.8 439.5,207.9 440.8,207.9 442.1,208.0 443.4,208.0 444.8,208.0 446.1,208.1 447.4,208.1 448.7,208.2 450.0,208.2 451.3,208.2 452.6,208.3 454.0,208.3 455.3,208.4 456.6,208.4 457.9,208.4 459.2,208.5 460.5,208.5 461.8,208.6 463.2,208.6 464.5,208.6 465.8,208.7 467.1,208.7 468.4,208.8 469.7,208.8 471.1,208.8 472.4,208.9 473.7,208.9 475.0,209.0 476.3,209.0 477.6,209.0 478.9,209.1 480.3,209.1 481.6,209.1 482.9,209.2 484.2,209.2 485.5,209.3 486.8,209.3 488.1,209.3 489.5,209.4 490.8,209.4 492.1,209.5 493.4,209.5 494.7,209.5 496.0,209.6 497.4,209.6 498.7,209.7 500.0,209.7 501.3,209.7 502.6,209.8 503.9,209.8 505.2,209.9 506.6,209.9 507.9,209.9 509.2,210.0 510.5,210.0 511.8,210.1 513.1,210.1 514.5,210.1 515.8,210.2 517.1,210.2 518.4,210.3 519.7,210.3 521.0,210.3 522.3,210.3 523.7,210.4 525.0,210.4 526.3,210.4 527.6,210.4 528.9,210.5 530.2,210.5 531.5,210.5 532.9,210.5 534.2,210.6 535.5,210.6 536.8,210.6 538.1,210.6 539.4,210.7 540.8,210.7 542.1,210.7 543.4,210.7 544.7,210.8 546.0,210.8 547.3,210.8 548.6,210.8 550.0,210.9 551.3,210.9 552.6,210.9 553.9,210.9 555.2,211.0 556.5,211.0 557.8,211.0 559.2,211.0 560.5,211.1 561.8,211.1 563.1,211.1 564.4,211.1 565.7,211.2 567.0,211.2 568.4,211.2 569.7,211.2 571.0,211.3 572.3,211.3 573.6,211.3 574.9,211.3 576.3,211.4 577.6,211.4 578.9,211.4 580.2,211.4 581.5,211.5 582.8,211.5 584.1,211.5 585.5,211.5 586.8,211.6 588.1,211.6 589.4,211.6 590.7,211.6 592.0,211.7 593.4,211.7 594.7,211.7 596.0,211.7 597.3,211.7 598.6,211.8 599.9,211.8 601.2,211.8 602.6,211.8 603.9,211.8 605.2,211.8 606.5,211.9 607.8,211.9 609.1,211.9 610.4,211.9 611.8,211.9 613.1,211.9 614.4,211.9 615.7,211.9 617.0,211.9 618.3,211.9 619.6,212.0 621.0,212.0 622.3,212.0 623.6,212.0 624.9,212.0 626.2,212.0 627.5,212.0 628.9,212.0 630.2,212.0 631.5,212.0 632.8,212.1 634.1,212.1 635.4,212.1 636.7,212.1 638.1,212.1 639.4,212.1 640.7,212.1 642.0,212.1 643.3,212.1 644.6,212.1 645.9,212.2 647.3,212.2 648.6,212.2 649.9,212.2 651.2,212.2 652.5,212.2 653.8,212.2 655.2,212.2 656.5,212.2 657.8,212.2 659.1,212.3 660.4,212.3 661.7,212.3 663.0,212.3 664.4,212.3 665.7,212.3 667.0,212.3 668.3,212.3 669.6,212.3 670.9,212.4 672.2,212.4 673.6,212.4 674.9,212.4 676.2,212.4 677.5,212.4 678.8,212.4 680.1,212.4 681.5,212.4 682.8,212.4 684.1,212.5 685.4,212.5 686.7,212.5 688.0,212.5 689.3,212.5 690.7,212.5 692.0,212.5 693.3,212.5 694.6,212.5 695.9,212.6 697.2,212.6 698.5,212.6 699.9,212.6 701.2,212.6 702.5,212.6 703.8,212.6 705.1,212.6 706.4,212.6 707.8,212.7 709.1,212.7 710.4,212.7 711.7,212.7 713.0,212.7 714.3,212.7 715.6,212.7 717.0,212.7 718.3,212.8 719.6,212.8 720.9,212.8 722.2,212.8 723.5,212.8 724.9,212.8 726.2,212.8 727.5,212.8 728.8,212.8 730.1,212.9 731.4,212.9 732.7,212.9 734.1,212.9 735.4,212.9 736.7,212.9 738.0,212.9 739.3,212.9 740.6,213.0 741.9,213.0 743.3,213.0 744.6,213.0 745.9,213.0 747.2,213.0 748.5,213.0 749.8,213.0 751.1,213.0 752.5,213.1 753.8,213.1 755.1,213.1 756.4,213.1 757.7,213.1 759.0,213.1 760.4,213.1 761.7,213.1 763.0,213.1 764.3,213.2 765.6,213.2 766.9,213.2 768.2,213.2 769.6,213.2 770.9,213.2 772.2,213.2 773.5,213.2 774.8,213.3 776.1,213.3 777.4,213.3 778.8,213.3 780.1,213.3 781.4,213.3 782.7,213.3 784.0,213.3 785.3,213.3 786.7,213.3 788.0,213.3 789.3,213.3 790.6,213.3 791.9,213.3 793.2,213.3 794.5,213.3 795.9,213.3 797.2,213.3 798.5,213.3 799.8,213.3 801.1,213.3 802.4,213.4 803.8,213.4 805.1,213.4 806.4,213.4 807.7,213.4 809.0,213.4 810.3,213.4 811.6,213.4 813.0,213.4 814.3,213.4 815.6,213.4 816.9,213.4 818.2,213.4 819.5,213.4 820.8,213.4 822.2,213.4 823.5,213.4 824.8,213.4 826.1,213.4 827.4,213.4 828.7,213.4 830.0,213.4 831.4,213.4 832.7,213.4 834.0,213.4 835.3,213.4 836.6,213.4 837.9,213.4 839.3,213.4 840.6,213.4 841.9,213.4 843.2,213.4 844.5,213.4 845.8,213.4 847.1,213.5 848.5,213.5 849.8,213.5 851.1,213.5 852.4,213.5 853.7,213.5 855.0,213.5 856.4,213.5 857.7,213.5 859.0,213.5 860.3,213.5 861.6,213.5 862.9,213.5 864.2,213.5 865.6,213.5 866.9,213.5 868.2,213.5 869.5,213.5" fill="none" stroke="#edb120" stroke-width="1.5"/>
<path d="M81.8 193.6h0M83.1 193.6h0M84.4 193.7h0M85.8 193.7h0M87.1 193.8h0M88.4 193.9h0M89.7 193.9h0M91.0 194.0h0M92.3 194.1h0M93.7 194.1h0M95.0 194.2h0M96.3 194.2h0M97.6 194.3h0M98.9 194.4h0M100.2 194.4h0M101.5 194.5h0M102.9 194.5h0M104.2 194.6h0M105.5 194.7h0M106.8 194.7h0M108.1 194.8h0M109.4 194.9h0M110.7 194.9h0M112.1 195.0h0M113.4 195.0h0M114.7 195.1h0M116.0 195.2h0M117.3 195.2h0M118.6 195.3h0M119.9 195.3h0M121.3 195.4h0M122.6 195.5h0M123.9 195.5h0M125.2 195.6h0M126.5 195.7h0M127.8 195.7h0M129.2 195.8h0M130.5 195.8h0M131.8 195.9h0M133.1 196.0h0M134.4 196.0h0M135.7 196.1h0M137.0 196.1h0M138.4 196.2h0M139.7 196.3h0M141.0 196.3h0M142.3 196.4h0M143.6 196.5h0M144.9 196.5h0M146.2 196.6h0M147.6 196.6h0M148.9 196.7h0M150.2 196.8h0M151.5 196.8h0M152.8 196.9h0M154.1 197.0h0M155.5 197.0h0M156.8 197.1h0M158.1 197.1h0M159.4 197.2h0M160.7 197.3h0M162.0 197.3h0M163.3 197.4h0M164.7 197.4h0M166.0 197.5h0M167.3 197.6h0M168.6 197.6h0M169.9 197.7h0M171.2 197.8h0M172.6 197.8h0M173.9 197.9h0M175.2 197.9h0M176.5 198.0h0M177.8 198.1h0M179.1 198.1h0M180.4 198.2h0M181.8 198.2h0M183.1 198.3h0M184.4 198.4h0M185.7 198.4h0M187.0 198.5h0M188.3 198.6h0M189.6 198.6h0M191.0 198.7h0M192.3 198.7h0M193.6 198.8h0M194.9 198.9h0M196.2 198.9h0M197.5 199.0h0M198.8 199.0h0M200.2 199.1h0M201.5 199.2h0M202.8 199.2h0M204.1 199.3h0M205.4 199.3h0M206.7 199.4h0M208.1 199.4h0M209.4 199.5h0M210.7 199.5h0M212.0 199.6h0M213.3 199.6h0M214.6 199.7h0M215.9 199.7h0M217.3 199.8h0M218.6 199.8h0M219.9 199.9h0M221.2 199.9h0M222.5 200.0h0M223.8 200.1h0M225.2 200.1h0M226.5 200.2h0M227.8 200.2h0M229.1 200.3h0M230.4 200.3h0M231.7 200.4h0M233.0 200.4h0M234.4 200.5h0M235.7 200.5h0M237.0 200.6h0M238.3 200.6h0M239.6 200.7h0M240.9 200.7h0M242.2 200.8h0M243.6 200.8h0M244.9 200.9h0M246.2 200.9h0M247.5 201.0h0M248.8 201.1h0M250.1 201.1h0M251.4 201.2h0M252.8 201.2h0M254.1 201.3h0M255.4 201.3h0M256.7 201.4h0M258.0 201.4h0M259.3 201.5h0M260.7 201.5h0M262.0 201.6h0M263.3 201.6h0M264.6 201.7h0M265.9 201.7h0M267.2 201.8h0M268.5 201.8h0M269.9 201.9h0M271.2 201.9h0M272.5 202.0h0M273.8 202.1h0M275.1 202.1h0M276.4 202.2h0M277.8 202.2h0M279.1 202.3h0M280.4 202.3h0M281.7 202.4h0M283.0 202.4h0M284.3 202.5h0M285.6 202.5h0M287.0 202.6h0M288.3 202.6h0M289.6 202.7h0M290.9 202.7h0M292.2 202.8h0M293.5 202.8h0M294.8 202.9h0M296.2 202.9h0M297.5 203.0h0M298.8 203.1h0M300.1 203.1h0M301.4 203.2h0M302.7 203.2h0M304.0 203.3h0M305.4 203.3h0M306.7 203.4h0M308.0 203.4h0M309.3 203.5h0M310.6 203.5h0M311.9 203.6h0M313.3 203.6h0M314.6 203.7h0M315.9 203.7h0M317.2 203.8h0M318.5 203.8h0M319.8 203.9h0M321.1 203.9h0M322.5 204.0h0M323.8 204.1h0M325.1 204.1h0M326.4 204.2h0M327.7 204.2h0M329.0 204.3h0M330.4 204.3h0M331.7 204.4h0M333.0 204.4h0M334.3 204.5h0M335.6 204.5h0M336.9 204.6h0M338.2 204.6h0M339.6 204.7h0M340.9 204.7h0M342.2 204.8h0M343.5 204.8h0M344.8 204.9h0M346.1 204.9h0M347.4 205.0h0M348.8 205.1h0M350.1 205.1h0M351.4 205.2h0M352.7 205.2h0M354.0 205.3h0M355.3 205.3h0M356.6 205.4h0M358.0 205.4h0M359.3 205.5h0M360.6 205.5h0M361.9 205.6h0M363.2 205.6h0M364.5 205.6h0M365.9 205.7h0M367.2 205.7h0M368.5 205.8h0M369.8 205.8h0M371.1 205.8h0M372.4 205.9h0M373.7 205.9h0M375.1 206.0h0M376.4 206.0h0M377.7 206.0h0M379.0 206.1h0M380.3 206.1h0M381.6 206.1h0M382.9 206.2h0M384.3 206.2h0M385.6 206.3h0M386.9 206.3h0M388.2 206.3h0M389.5 206.4h0M390.8 206.4h0M392.2 206.5h0M393.5 206.5h0M394.8 206.5h0M396.1 206.6h0M397.4 206.6h0M398.7 206.7h0M400.0 206.7h0M401.4 206.7h0M402.7 206.8h0M404.0 206.8h0M405.3 206.9h0M406.6 206.9h0M407.9 206.9h0M409.2 207.0h0M410.6 207.0h0M411.9 207.1h0M413.2 207.1h0M414.5 207.1h0M415.8 207.2h0M417.1 207.2h0M418.5 207.3h0M419.8 207.3h0M421.1 207.3h0M422.4 207.4h0M423.7 207.4h0M425.0 207.5h0M426.3 207.5h0M427.7 207.5h0M429.0 207.6h0M430.3 207.6h0M431.6 207.6h0M432.9 207.7h0M434.2 207.7h0M435.6 207.8h0M436.9 207.8h0M438.2 207.8h0M439.5 207.9h0M440.8 207.9h0M442.1 208.0h0M443.4 208.0h0M444.8 208.0h0M446.1 208.1h0M447.4 208.1h0M448.7 208.2h0M450.0 208.2h0M451.3 208.2h0M452.6 208.3h0M454.0 208.3h0M455.3 208.4h0M456.6 208.4h0M457.9 208.4h0M459.2 208.5h0M460.5 208.5h0M461.8 208.6h0M463.2 208.6h0M464.5 208.6h0M465.8 208.7h0M467.1 208.7h0M468.4 208.8h0M469.7 208.8h0M471.1 208.8h0M472.4 208.9h0M473.7 208.9h0M475.0 209.0h0M476.3 209.0h0M477.6 209.0h0M478.9 209.1h0M480.3 209.1h0M481.6 209.1h0M482.9 209.2h0M484.2 209.2h0M485.5 209.3h0M486.8 209.3h0M488.1 209.3h0M489.5 209.4h0M490.8 209.4h0M492.1 209.5h0M493.4 209.5h0M494.7 209.5h0M496.0 209.6h0M497.4 209.6h0M498.7 209.7h0M500.0 209.7h0M501.3 209.7h0M502.6 209.8h0M503.9 209.8h0M505.2 209.9h0M506.6 209.9h0M507.9 209.9h0M509.2 210.0h0M510.5 210.0h0M511.8 210.1h0M513.1 210.1h0M514.5 210.1h0M515.8 210.2h0M517.1 210.2h0M518.4 210.3h0M519.7 210.3h0M521.0 210.3h0M522.3 210.3h0M523.7 210.4h0M525.0 210.4h0M526.3 210.4h0M527.6 210.4h0M528.9 210.5h0M530.2 210.5h0M531.5 210.5h0M532.9 210.5h0M534.2 210.6h0M535.5 210.6h0M536.8 210.6h0M538.1 210.6h0M539.4 210.7h0M540.8 210.7h0M542.1 210.7h0M543.4 210.7h0M544.7 210.8h0M546.0 210.8h0M547.3 210.8h0M548.6 210.8h0M550.0 210.9h0M551.3 210.9h0M552.6 210.9h0M553.9 210.9h0M555.2 211.0h0M556.5 211.0h0M557.8 211.0h0M559.2 211.0h0M560.5 211.1h0M561.8 211.1h0M563.1 211.1h0M564.4 211.1h0M565.7 211.2h0M567.0 211.2h0M568.4 211.2h0M569.7 211.2h0M571.0 211.3h0M572.3 211.3h0M573.6 211.3h0M574.9 211.3h0M576.3 211.4h0M577.6 211.4h0M578.9 211.4h0M580.2 211.4h0M581.5 211.5h0M582.8 211.5h0M584.1 211.5h0M585.5 211.5h0M586.8 211.6h0M588.1 211.6h0M589.4 211.6h0M590.7 211.6h0M592.0 211.7h0M593.4 211.7h0M594.7 211.7h0M596.0 211.7h0M597.3 211.7h0M598.6 211.8h0M599.9 211.8h0M601.2 211.8h0M602.6 211.8h0M603.9 211.8h0M605.2 211.8h0M606.5 211.9h0M607.8 211.9h0M609.1 211.9h0M610.4 211.9h0M611.8 211.9h0M613.1 211.9h0M614.4 211.9h0M615.7 211.9h0M617.0 211.9h0M618.3 211.9h0M619.6 212.0h0M621.0 212.0h0M622.3 212.0h0M623.6 212.0h0M624.9 212.0h0M626.2 212.0h0M627.5 212.0h0M628.9 212.0h0M630.2 212.0h0M631.5 212.0h0M632.8 212.1h0M634.1 212.1h0M635.4 212.1h0M636.7 212.1h0M638.1 212.1h0M639.4 212.1h0M640.7 212.1h0M642.0 212.1h0M643.3 212.1h0M644.6 212.1h0M645.9 212.2h0M647.3 212.2h0M648.6 212.2h0M649.9 212.2h0M651.2 212.2h0M652.5 212.2h0M653.8 212.2h0M655.2 212.2h0M656.5 212.2h0M657.8 212.2h0M659.1 212.3h0M660.4 212.3h0M661.7 212.3h0M663.0 212.3h0M664.4 212.3h0M665.7 212.3h0M667.0 212.3h0M668.3 212.3h0M669.6 212.3h0M670.9 212.4h0M672.2 212.4h0M673.6 212.4h0M674.9 212.4h0M676.2 212.4h0M677.5 212.4h0M678.8 212.4h0M680.1 212.4h0M681.5 212.4h0M682.8 212.4h0M684.1 212.5h0M685.4 212.5h0M686.7 212.5h0M688.0 212.5h0M689.3 212.5h0M690.7 212.5h0M692.0 212.5h0M693.3 212.5h0M694.6 212.5h0M695.9 212.6h0M697.2 212.6h0M698.5 212.6h0M699.9 212.6h0M701.2 212.6h0M702.5 212.6h0M703.8 212.6h0M705.1 212.6h0M706.4 212.6h0M707.8 212.7h0M709.1 212.7h0M710.4 212.7h0M711.7 212.7h0M713.0 212.7h0M714.3 212.7h0M715.6 212.7h0M717.0 212.7h0M718.3 212.8h0M719.6 212.8h0M720.9 212.8h0M722.2 212.8h0M723.5 212.8h0M724.9 212.8h0M726.2 212.8h0M727.5 212.8h0M728.8 212.8h0M730.1 212.9h0M731.4 212.9h0M732.7 212.9h0M734.1 212.9h0M735.4 212.9h0M736.7 212.9h0M738.0 212.9h0M739.3 212.9h0M740.6 213.0h0M741.9 213.0h0M743.3 213.0h0M744.6 213.0h0M745.9 213.0h0M747.2 213.0h0M748.5 213.0h0M749.8 213.0h0M751.1 213.0h0M752.5 213.1h0M753.8 213.1h0M755.1 213.1h0M756.4 213.1h0M757.7 213.1h0M759.0 213.1h0M760.4 213.1h0M761.7 213.1h0M763.0 213.1h0M764.3 213.2h0M765.6 213.2h0M766.9 213.2h0M768.2 213.2h0M769.6 213.2h0M770.9 213.2h0M772.2 213.2h0M773.5 213.2h0M774.8 213.3h0M776.1 213.3h0M777.4 213.3h0M778.8 213.3h0M780.1 213.3h0M781.4 213.3h0M782.7 213.3h0M784.0 213.3h0M785.3 213.3h0M786.7 213.3h0M788.0 213.3h0M789.3 213.3h0M790.6 213.3h0M791.9 213.3h0M793.2 213.3h0M794.5 213.3h0M795.9 213.3h0M797.2 213.3h0M798.5 213.3h0M799.8 213.3h0M801.1 213.3h0M802.4 213.4h0M803.8 213.4h0M805.1 213.4h0M806.4 213.4h0M807.7 213.4h0M809.0 213.4h0M810.3 213.4h0M811.6 213.4h0M813.0 213.4h0M814.3 213.4h0M815.6 213.4h0M816.9 213.4h0M818.2 213.4h0M819.5 213.4h0M820.8 213.4h0M822.2 213.4h0M823.5 213.4h0M824.8 213.4h0M826.1 213.4h0M827.4 213.4h0M828.7 213.4h0M830.0 213.4h0M831.4 213.4h0M832.7 213.4h0M834.0 213.4h0M835.3 213.4h0M836.6 213.4h0M837.9 213.4h0M839.3 213.4h0M840.6 213.4h0M841.9 213.4h0M843.2 213.4h0M844.5 213.4h0M845.8 213.4h0M847.1 213.5h0M848.5 213.5h0M849.8 213.5h0M851.1 213.5h0M852.4 213.5h0M853.7 213.5h0M855.0 213.5h0M856.4 213.5h0M857.7 213.5h0M859.0 213.5h0M860.3 213.5h0M861.6 213.5h0M862.9 213.5h0M864.2 213.5h0M865.6 213.5h0M866.9 213.5h0M868.2 213.5h0M869.5 213.5h0" stroke="#edb120" stroke-width="3.3" stroke-linecap="round" fill="none"/>
<path d="M206.90 735.40L216.10 735.40M208.25 732.15L214.75 738.65M211.50 730.80L211.50 740.00M214.75 732.15L208.25 738.65" stroke="#d9008c" stroke-width="1.4" stroke-linecap="round" fill="none"/>
<path d="M338.90 320.60L348.10 320.60M340.25 317.35L346.75 323.85M343.50 316.00L343.50 325.20M346.75 317.35L340.25 323.85" stroke="#d9008c" stroke-width="1.4" stroke-linecap="round" fill="none"/>
<path d="M470.20 260.40L479.40 260.40M471.55 257.15L478.05 263.65M474.80 255.80L474.80 265.00M478.05 257.15L471.55 263.65" stroke="#d9008c" stroke-width="1.4" stroke-linecap="round" fill="none"/>
<path d="M601.90 220.30L611.10 220.30M603.25 217.05L609.75 223.55M606.50 215.70L606.50 224.90M609.75 217.05L603.25 223.55" stroke="#d9008c" stroke-width="1.4" stroke-linecap="round" fill="none"/>
<path d="M733.70 252.40L742.90 252.40M735.05 249.15L741.55 255.65M738.30 247.80L738.30 257.00M741.55 249.15L735.05 255.65" stroke="#d9008c" stroke-width="1.4" stroke-linecap="round" fill="none"/>
<path d="M865.00 220.40L874.20 220.40M866.35 217.15L872.85 223.65M869.60 215.80L869.60 225.00M872.85 217.15L866.35 223.65" stroke="#d9008c" stroke-width="1.4" stroke-linecap="round" fill="none"/>
</svg>
<div class="a bold" style="left:0;top:102px;width:952px;text-align:center;font-size:13.2px;color:#262626">Episode reward for rlSimplePendulumModel with rlTD3Agent</div>
<div class="a lbl yl" style="left:0;top:112.9px;width:76px;text-align:right">2000</div>
<div class="a lbl yl" style="left:0;top:186.6px;width:76px;text-align:right">0</div>
<div class="a lbl yl" style="left:0;top:260.2px;width:76px;text-align:right">-2000</div>
<div class="a lbl yl" style="left:0;top:333.9px;width:76px;text-align:right">-4000</div>
<div class="a lbl yl" style="left:0;top:407.6px;width:76px;text-align:right">-6000</div>
<div class="a lbl yl" style="left:0;top:481.2px;width:76px;text-align:right">-8000</div>
<div class="a lbl yl" style="left:0;top:554.9px;width:76px;text-align:right">-10000</div>
<div class="a lbl yl" style="left:0;top:628.6px;width:76px;text-align:right">-12000</div>
<div class="a lbl yl" style="left:0;top:702.2px;width:76px;text-align:right">-14000</div>
<div class="a lbl yl" style="left:0;top:775.9px;width:76px;text-align:right">-16000</div>
<div class="a lbl" style="left:30px;top:786px;width:100px;text-align:center">0</div>
<div class="a lbl" style="left:162px;top:786px;width:100px;text-align:center">100</div>
<div class="a lbl" style="left:293px;top:786px;width:100px;text-align:center">200</div>
<div class="a lbl" style="left:425px;top:786px;width:100px;text-align:center">300</div>
<div class="a lbl" style="left:556px;top:786px;width:100px;text-align:center">400</div>
<div class="a lbl" style="left:688px;top:786px;width:100px;text-align:center">500</div>
<div class="a lbl" style="left:819px;top:786px;width:100px;text-align:center">600</div>
<div class="a" style="left:376px;top:799px;width:200px;text-align:center;font-size:13.1px;color:#262626">Episode Number</div>
<div class="a" style="left:-73px;top:444px;width:200px;text-align:center;font-size:13.2px;color:#262626;transform:rotate(-90deg)">Episode Reward</div>

<!-- right panel -->
<div class="a" style="left:911px;top:97px;width:160px;height:15px;background:#fff"></div>
<div class="a" style="left:911px;top:97px;width:18px;height:15px;background:#258be0"></div>
<div class="a" style="left:1081px;top:92px;width:110px;height:25px;border:1px solid #cfcfcf;border-radius:4px;background:#f3f3f3"></div>
<div class="a" style="left:1081px;top:97px;width:110px;text-align:center;font-size:12px;color:#a6a6a6">Training stopped</div>

<div class="a t13" style="left:911px;top:128px">Episode number:</div>
<div class="a t13" style="left:1041px;top:128px">600/5000</div>
<div class="a t13" style="left:911px;top:153px">Start time:</div>
<div class="a t13" style="left:1041px;top:153px">07-Nov-2024 19:26:50</div>
<div class="a t13" style="left:911px;top:178px">Duration:</div>
<div class="a t13" style="left:1041px;top:178px">01:16:52</div>
<div class="a t13" style="left:911px;top:203px">Final result:</div>
<div class="a t13" style="left:1041px;top:203px;line-height:14.8px">Training finished after all<br>agents reached stop<br>training criteria.</div>

<div class="box" style="left:911px;top:258px;width:280px;height:295px"></div>
<div class="hdrline" style="left:911px;top:278px;width:280px"></div>
<div class="a t13 bold" style="left:915px;top:261px">Training Information</div>
<div class="a" style="left:922px;top:289px;width:258px;height:95px;background:#fff;border:1px solid #a0a0a0"></div>
<div class="a" style="left:923px;top:290px;width:256px;height:26px;background:#f5f5f5;border-bottom:1px solid #a0a0a0"></div>
<div class="a" style="left:1051px;top:290px;width:1px;height:51px;background:#a0a0a0"></div>
<div class="a" style="left:923px;top:316px;width:256px;height:25px;background:#2c88d9"></div>
<div class="a" style="left:1051px;top:316px;width:1px;height:25px;background:#6a6a6a"></div>
<div class="a" style="left:923px;top:341px;width:256px;height:1px;background:#a0a0a0"></div>
<div class="a t13 bold" style="left:926px;top:297px">Agent</div>
<div class="a t13 bold" style="left:1055px;top:297px">Status</div>
<div class="a t13 bold" style="left:926px;top:320px;color:#fff;letter-spacing:-0.5px">rlTD3Agent</div>
<div class="a t13 bold" style="left:1055px;top:320px;color:#fff;letter-spacing:-0.5px">Training finished</div>
<div class="a t13 bold" style="left:922px;top:395px">Episode Information (rlTD3Agent):</div>
<div class="a t13" style="left:922px;top:420px">Episode reward:</div>
<div class="a t13" style="left:1042px;top:420px">-737.5765</div>
<div class="a t13" style="left:922px;top:445px">Average reward:</div>
<div class="a t13" style="left:1042px;top:445px">-736.9357</div>
<div class="a t13" style="left:922px;top:470px">Episode Q0:</div>
<div class="a t13" style="left:1042px;top:470px">-549.7352</div>
<div class="a t13" style="left:922px;top:495px">Evaluation statistic:</div>
<div class="a t13" style="left:1042px;top:495px">-731.3141</div>
<div class="a" style="left:1070px;top:519px;width:110px;height:23px;border:1px solid #8c8c8c;border-radius:4px;background:#f8f8f8"></div>
<div class="a t13" style="left:1070px;top:523px;width:110px;text-align:center">More Details...</div>

<div class="box" style="left:911px;top:563px;width:280px;height:118px"></div>
<div class="hdrline" style="left:911px;top:583px;width:280px"></div>
<div class="a t13 bold" style="left:915px;top:566px">Plot Options</div>
<div class="a" style="left:922px;top:595px;width:14px;height:14px;border:1px solid #333;background:#fff"></div>
<svg class="a" style="left:922px;top:595px" width="14" height="14"><path d="M2.2 6.8L5.8 10.2L11.4 2.6" stroke="#1a1a1a" stroke-width="1.9" fill="none"/></svg>
<div class="a t13" style="left:939px;top:595px">Show EpisodeQ0</div>
<div class="a" style="left:922px;top:622px;width:14px;height:14px;border:1px solid #333;background:#fff"></div>
<svg class="a" style="left:922px;top:622px" width="14" height="14"><path d="M2.2 6.8L5.8 10.2L11.4 2.6" stroke="#1a1a1a" stroke-width="1.9" fill="none"/></svg>
<div class="a t13" style="left:939px;top:622px">Show evaluation statistic</div>
<div class="a" style="left:922px;top:652px;width:14px;height:14px;border:1px solid #444;background:#fff"></div>
<div class="a t13" style="left:939px;top:651px">Show last N episodes</div>
<div class="a" style="left:1066px;top:647px;width:114px;height:23px;border:1px solid #d0d0d0;background:#f4f4f4"></div>
<div class="a t13" style="left:1066px;top:651px;width:109px;text-align:right;color:#a0a0a0">5000</div>

<div class="box" style="left:911px;top:691px;width:280px;height:102px"></div>
<div class="a" style="left:917px;top:697px;width:268px;height:90px;background:#fff"></div>
<svg class="a" style="left:0;top:0" width="1202" height="859">
<path d="M973.5 704.5H1013.5" stroke="#33b3e8" stroke-width="1.4"/><path d="M993.5 704.5h0" stroke="#33b3e8" stroke-width="3" stroke-linecap="round"/>
<path d="M973.5 723.5H1013.5" stroke="#0a6ec4" stroke-width="1.5"/><path d="M993.5 723.5h0" stroke="#0a6ec4" stroke-width="3" stroke-linecap="round"/>
<path d="M973.5 742.5H1013.5" stroke="#edb120" stroke-width="1.3"/><path d="M993.5 742.5h0" stroke="#edb120" stroke-width="3" stroke-linecap="round"/>
<path d="M988.80 770.70L997.80 770.70M990.12 767.52L996.48 773.88M993.30 766.20L993.30 775.20M996.48 767.52L990.12 773.88" stroke="#d9008c" stroke-width="1.0" stroke-linecap="round" fill="none"/>
</svg>
<div class="a" style="left:1017px;top:698px;font-size:10.7px;color:#262626">Episode reward</div>
<div class="a" style="left:1017px;top:717px;font-size:10.7px;color:#262626">Average reward</div>
<div class="a" style="left:1017px;top:736px;font-size:10.7px;color:#262626">Episode Q0</div>
<div class="a" style="left:1017px;top:759px;font-size:10.7px;color:#262626;line-height:12px">Evaluation statistic<br>(MeanEpisodeReward)</div>

<div class="a" id="status"></div>
<div class="a" style="left:0;top:0;width:1px;height:859px;background:#8a8a8a;z-index:5"></div>
<div class="a" style="left:1201px;top:0;width:1px;height:859px;background:#9a9a9a;z-index:5"></div>
<div class="a" style="left:1px;top:834px;width:899px;height:1px;background:#fff"></div>
<div class="a" style="left:901px;top:835px;width:300px;height:1px;background:#b8b8b8"></div>
<svg class="a" style="left:1185px;top:841px" width="11" height="12"><path d="M0 0L7 6L0 12Z" fill="#7a7a7a"/><rect x="8" y="0" width="2" height="12" fill="#7a7a7a"/></svg>
<div class="a" style="left:900px;top:836px;width:1px;height:22px;background:#c0c0c0"></div>
</body></html>
